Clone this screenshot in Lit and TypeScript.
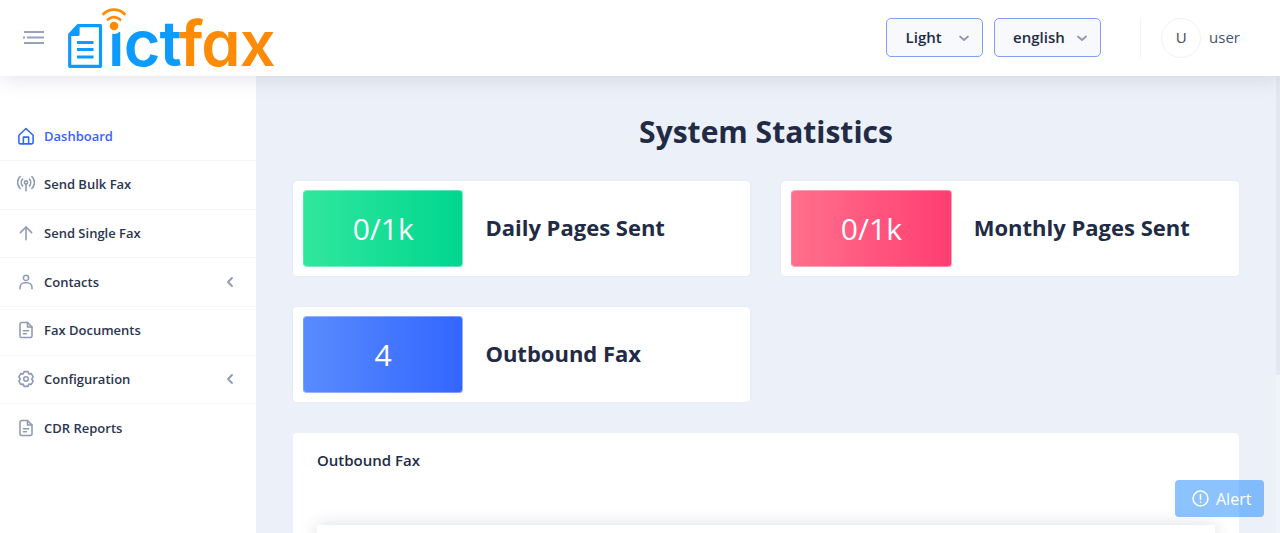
import { LitElement, html, css, svg } from "lit";
import { customElement } from "lit/decorators.js";

const sw = (body: unknown, size = 18) => html`<svg class="ic" width=${size} height=${size} viewBox="0 0 24 24" fill="none" stroke="currentColor" stroke-width="2.1" stroke-linecap="round" stroke-linejoin="round">${body}</svg>`;

const icons: Record<string, unknown> = {
  home: svg`<path d="M2.500 11 12 2l9.500 9v9a2.500 2.500 0 0 1-2.500 2.500H5A2.500 2.500 0 0 1 2.500 20z"/><path d="M8.500 22v-8.500h7V22"/>`,
  radio: svg`<circle cx="12" cy="10" r="2.200"/><path d="M12 12v9"/><path d="M7.500 14.500a6.500 6.500 0 0 1 0-9"/><path d="M16.500 5.500a6.500 6.500 0 0 1 0 9"/><path d="M4.200 18A11 11 0 0 1 4.200 2"/><path d="M19.800 2a11 11 0 0 1 0 16"/>`,
  up: svg`<path d="M12 21V4"/><path d="M4.500 11.500 12 4l7.500 7.500"/>`,
  user: svg`<circle cx="12" cy="6.500" r="3.500"/><path d="M4 21v-1.500A6.500 6.500 0 0 1 10.500 13h3a6.500 6.500 0 0 1 6.500 6.500V21"/>`,
  doc: svg`<path d="M14 2H6a2 2 0 0 0-2 2v16a2 2 0 0 0 2 2h12a2 2 0 0 0 2-2V8z"/><path d="M14 2v6h6"/><path d="M8.500 13h7"/><path d="M8.500 17h4"/>`,
  gear: svg`<circle cx="12" cy="12" r="3"/><path d="M9.500 2.200h5l1.300 3 3.200-.4 2.600 4.400-2 2.800 2 2.800-2.600 4.400-3.200-.4-1.300 3h-5l-1.300-3-3.200.4-2.600-4.400 2-2.800-2-2.800 2.600-4.400 3.200.4z"/>`,
};

const menu = [
  { label: "Dashboard", icon: "home", active: true },
  { label: "Send Bulk Fax", icon: "radio" },
  { label: "Send Single Fax", icon: "up" },
  { label: "Contacts", icon: "user", arrow: true },
  { label: "Fax Documents", icon: "doc" },
  { label: "Configuration", icon: "gear", arrow: true },
  { label: "CDR Reports", icon: "doc" },
];

const stats = [
  { value: "0/1k", label: "Daily Pages Sent", tone: "green" },
  { value: "0/1k", label: "Monthly Pages Sent", tone: "pink" },
  { value: "4", label: "Outbound Fax", tone: "blue" },
];

@customElement("app-root")
export class AppRoot extends LitElement {
  static styles = css`
    :host { display: block; height: 533px; overflow: hidden; position: relative; font-family: "Open Sans", "Liberation Sans", sans-serif; color: #222b45; background: #ecf0f8; }
    * { box-sizing: border-box; }
    .top { height: 76px; padding-bottom: 1px; background: #fff; display: flex; align-items: center; position: relative; z-index: 2; box-shadow: 0 2px 20px rgba(40, 50, 90, .14); }
    .burger { margin-left: 23px; width: 22px; height: 15px; color: #98a2ba; display: block; }
    .logo { margin-left: 23px; align-self: flex-start; position: relative; width: 210px; height: 76px; }
    .logo-word { position: absolute; left: 40px; top: 2px; font-family: Inter, sans-serif; font-weight: 600; font-feature-settings: "cv11" 1; font-size: 63px; line-height: 82px; letter-spacing: -.8px; white-space: nowrap; color: #0d9cfd; }
    .logo-word b { font-weight: 600; color: #fe8a06; }
    .logo-doc { position: absolute; left: 0; top: 24px; }
    .logo-wifi { position: absolute; left: 31px; top: 7px; }
    .spacer { flex: 1; }
    .sel { height: 39px; border: 1px solid #7ea0f6; border-radius: 5px; background: #f7f9fd; display: flex; align-items: center; font-size: 15px; font-weight: 600; color: #222b45; padding-bottom: 2px; }
    .sel svg { color: #8f9bb3; position: relative; top: 1px; }
    .sel-a { width: 97px; padding-left: 18.500px; gap: 16px; margin-right: 11px; }
    .sel-b { width: 107px; padding-left: 18px; gap: 11px; }
    .divider { width: 1px; height: 40px; background: #f3f4f8; margin-left: 39px; margin-right: 20px; }
    .avatar { width: 40px; height: 40px; border-radius: 50%; border: 1px solid #f1f2f6; display: flex; align-items: center; justify-content: center; font-size: 15px; color: #3a4560; padding-bottom: 2px; }
    .uname { font-size: 15px; margin-left: 8px; margin-right: 40px; color: #4a5268; padding-bottom: 2px; }
    .body { display: grid; grid-template-columns: 256px 1fr; height: 457px; }
    .side { background: #fff; padding-top: 36.200px; }
    .item { height: 48.700px; padding: 0 0 1px 17px; display: flex; align-items: center; gap: 9px; font-size: 13px; font-weight: 600; color: #2b3550; border-bottom: 1px solid #f3f5f9; }
    .item:last-child { border-bottom: 0; }
    .item .ic { color: #8f9bb3; flex: none; }
    .item.active { color: #3366ff; }
    .item.active .ic { color: #3366ff; }
    .chev { margin-left: auto; margin-right: 21px; color: #8f9bb3; }
    .main { padding: 32px 41px 0 37px; overflow: hidden; }
    h1 { margin: 0 0 25px; text-align: center; font-size: 30px; line-height: 48px; font-weight: 700; color: #222b45; }
    .grid { display: grid; grid-template-columns: 457px 458px; column-gap: 31px; row-gap: 31.500px; }
    .card { height: 94.500px; background: #fff; border-radius: 4px; padding: 9px 10px; display: flex; align-items: center; box-shadow: 0 0 2px rgba(60, 70, 110, .08); }
    .tile { width: 36.700%; height: 76.500px; border-radius: 4px; color: #fff; font-size: 30px; display: flex; align-items: center; justify-content: center; border: 1px solid rgba(255, 255, 255, .35); flex: none; }
    .green { background: linear-gradient(90deg, #30e79d, #00d68f); }
    .pink { background: linear-gradient(90deg, #ff708d, #ff3d71); }
    .blue { background: linear-gradient(90deg, #598bff, #3366ff); }
    .card-label { margin: 0 0 3px 22px; font-size: 22px; font-weight: 700; color: #222b45; white-space: nowrap; }
    .panel { margin-top: 31.500px; background: #fff; border-radius: 4px; padding: 16px 24px 0; height: 200px; }
    .panel-title { font-size: 15px; line-height: 22px; font-weight: 600; color: #222b45; }
    .chart { margin-top: 54px; height: 120px; background: #fff; box-shadow: 0 0 16px rgba(40, 50, 90, .16); }
    .alert { position: absolute; left: 1175px; top: 480px; width: 89px; height: 37px; border-radius: 4px; background: rgba(0, 123, 255, .45); color: #fff; display: flex; align-items: center; justify-content: flex-start; padding-left: 17px; gap: 7px; font-size: 16px; z-index: 3; }
    .alert span { position: relative; top: .500px; }
    .track { position: absolute; right: 0; top: 76px; bottom: 0; width: 4px; background: #f1f3fa; z-index: 1; }
    .thumb { height: 299px; background: #e3e7f0; }
  `;

  render() {
    return html`
      <div class="top">
        <svg class="burger" viewBox="0 0 22 15" fill="none" stroke="currentColor" stroke-width="2"><path d="M1 2h20M4 7.500h17M1 13h20"/><path d="M0 7.500h2" /></svg>
        <div class="logo">
          <div class="logo-word">ict<b>fax</b></div>
          <svg class="logo-doc" width="36" height="44" viewBox="0 0 36 44" fill="none" stroke="#0d9cfd" stroke-width="3.200" stroke-linejoin="round"><path d="M10 1.700h22.500v40.600H1.700V10.500z"/><path d="M10 1.700v8.800H1.700" fill="#0d9cfd"/><path d="M9 18.500h16.500M9 25.500h16.500M9 33h16.500" stroke-width="3"/></svg>
          <svg class="logo-wifi" width="30" height="28" viewBox="0 0 30 28" fill="none" stroke="#fe8a06" stroke-width="2.800" stroke-linecap="round"><circle cx="15" cy="19" r="8" fill="#fff" stroke="none"/><path d="M4.500 7C10 1.200 20 1.200 25.500 7"/><path d="M9 12.500c3.500-3.200 8.500-3.200 12 0"/><circle cx="15" cy="19" r="4.300" fill="#fe8a06" stroke="none"/></svg>
        </div>
        <div class="spacer"></div>
        <div class="sel sel-a">Light<svg width="12" height="12" viewBox="0 0 12 12" fill="none" stroke="currentColor" stroke-width="1.800" stroke-linecap="round" stroke-linejoin="round"><path d="M2 4.500 6 8l4-3.500"/></svg></div>
        <div class="sel sel-b">english<svg width="12" height="12" viewBox="0 0 12 12" fill="none" stroke="currentColor" stroke-width="1.800" stroke-linecap="round" stroke-linejoin="round"><path d="M2 4.500 6 8l4-3.500"/></svg></div>
        <div class="divider"></div>
        <div class="avatar">U</div>
        <div class="uname">user</div>
      </div>
      <div class="body">
        <nav class="side">
          ${menu.map((m) => html`<div class="item ${m.active ? "active" : ""}">
            ${sw(icons[m.icon])}
            <span>${m.label}</span>
            ${m.arrow ? html`<svg class="chev" width="10" height="12" viewBox="0 0 10 12" fill="none" stroke="currentColor" stroke-width="1.800" stroke-linecap="round" stroke-linejoin="round"><path d="M7 2 3 6l4 4"/></svg>` : ""}
          </div>`)}
        </nav>
        <main class="main">
          <h1>System Statistics</h1>
          <div class="grid">
            ${stats.map((s) => html`<div class="card"><div class="tile ${s.tone}">${s.value}</div><div class="card-label">${s.label}</div></div>`)}
          </div>
          <section class="panel">
            <div class="panel-title">Outbound Fax</div>
            <div class="chart"></div>
          </section>
        </main>
      </div>
      <div class="track"><div class="thumb"></div></div>
      <div class="alert">
        <svg width="17" height="17" viewBox="0 0 24 24" fill="none" stroke="currentColor" stroke-width="2.200" stroke-linecap="round"><circle cx="12" cy="12" r="10.500"/><path d="M12 6.500v6.500M12 17v.2"/></svg>
        <span>Alert</span>
      </div>
    `;
  }
}
